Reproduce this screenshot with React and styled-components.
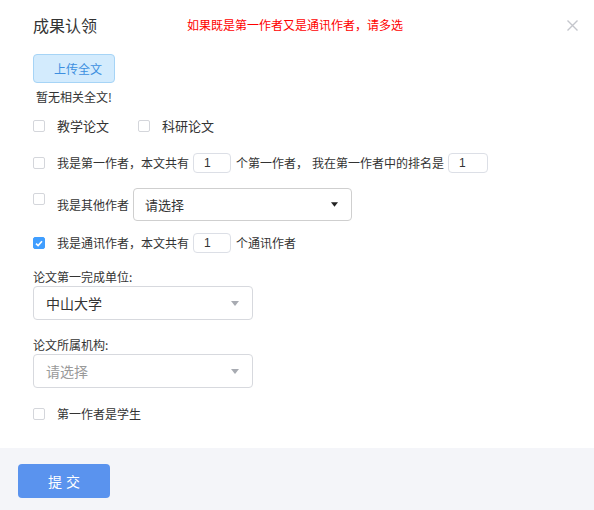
import React from "react";
import styled, { createGlobalStyle } from "styled-components";

const Global = createGlobalStyle`
  html, body { margin: 0; padding: 0; background: #fff; }
  body { font-family: "Noto Sans CJK SC", "Noto Sans", sans-serif; color: #333; }
`;

const Page = styled.div`
  width: 594px;
  height: 510px;
  display: flex;
  flex-direction: column;
  overflow: hidden;
`;

const Main = styled.div`
  flex: 1;
  padding: 0 16px 0 33px;
  display: flex;
  flex-direction: column;
  align-items: flex-start;
`;

const Header = styled.div`
  align-self: stretch;
  display: flex;
  align-items: center;
  height: 22px;
  margin-top: 14px;
`;

const Title = styled.div`
  font-size: 16px;
  line-height: 22px;
  color: #333;
`;

const Warn = styled.div`
  font-size: 12px;
  line-height: 22px;
  color: #ff0000;
  margin-left: 90px;
`;

const Close = styled.button`
  margin-left: auto;
  border: 0;
  background: none;
  padding: 0;
  width: 11px;
  height: 11px;
  display: flex;
  cursor: pointer;
`;

const UploadButton = styled.button`
  margin-top: 18px;
  width: 82px;
  height: 29px;
  border: 1px solid #a6d4f6;
  background: #d3ebfd;
  border-radius: 4px;
  color: #3d8fe0;
  font-family: inherit;
  font-size: 12px;
  padding: 0 0 0 8px;
  line-height: 27px;
`;

const Note = styled.div`
  margin-top: 5px;
  font-size: 12px;
  line-height: 18px;
  padding-left: 3px;
  color: #333;
`;

const Row = styled.div`
  display: flex;
  align-items: center;
  margin-top: ${(p) => p.$mt}px;
  min-height: 20px;
  font-size: ${(p) => p.$fs || 12}px;
  line-height: 20px;
  color: #333;
`;

const Box = styled.span`
  box-sizing: border-box;
  width: 12px;
  height: 12px;
  border: 1px solid ${(p) => (p.$on ? "#409eff" : "#d4d6db")};
  background: ${(p) => (p.$on ? "#409eff" : "#fff")};
  border-radius: 2px;
  display: inline-flex;
  align-items: center;
  justify-content: center;
  flex: none;
  margin-right: 12px;
  align-self: ${(p) => (p.$top ? "flex-start" : "center")};
  margin-top: ${(p) => (p.$top ? 5 : 0)}px;
`;

const Text = styled.span`
  white-space: nowrap;
  margin-right: ${(p) => p.$mr || 0}px;
`;

const NumInput = styled.span`
  box-sizing: border-box;
  width: ${(p) => p.$w}px;
  height: 20px;
  border: 1px solid #dcdfe6;
  border-radius: 4px;
  margin: 0 ${(p) => p.$mr}px 0 4px;
  padding-left: 10px;
  font-size: 12px;
  line-height: 18px;
  color: #333;
  font-family: "Liberation Sans", Arial, sans-serif;
`;

const Select = styled.div`
  box-sizing: border-box;
  width: ${(p) => p.$w}px;
  height: ${(p) => p.$h}px;
  border: 1px solid ${(p) => p.$border};
  border-radius: 4px;
  display: flex;
  align-items: center;
  padding: 0 13px 0 ${(p) => p.$pl || 12}px;
  font-size: ${(p) => p.$fs || 14}px;
  color: ${(p) => (p.$placeholder ? "#9a9a9a" : "#333")};
  margin-left: ${(p) => p.$ml || 0}px;
  margin-top: ${(p) => p.$mt || 0}px;
`;

const SelectText = styled.span`
  flex: 1;
  line-height: 20px;
`;

const Label = styled.div`
  margin-top: ${(p) => p.$mt}px;
  font-size: 12px;
  line-height: 18px;
  color: #333;
`;

const Footer = styled.div`
  height: 62px;
  background: #f4f5f9;
  padding: 16px 18px 0;
  box-sizing: border-box;
`;

const Submit = styled.button`
  width: 92px;
  height: 34px;
  border: 0;
  border-radius: 4px;
  background: #5a93ee;
  color: #fff;
  font-family: inherit;
  font-size: 14px;
  letter-spacing: 4px;
  padding-left: 10px;
`;

const Check = ({ on, top }) => (
  <Box $on={on} $top={top}>
    {on && (
      <svg width="8" height="7" viewBox="0 0 8 7">
        <path d="M1 3.6 L3.1 5.6 L7 1.2" stroke="#fff" strokeWidth="1.6" fill="none" />
      </svg>
    )}
  </Box>
);

const Caret = ({ color, w = 8 }) => (
  <svg width={w} height="5" viewBox="0 0 8 5">
    <path d="M0 0 L8 0 L4 5 Z" fill={color} />
  </svg>
);

export default function App() {
  return (
    <Page>
      <Global />
      <Main>
        <Header>
          <Title>成果认领</Title>
          <Warn>如果既是第一作者又是通讯作者，请多选</Warn>
          <Close aria-label="close">
            <svg width="11" height="11" viewBox="0 0 11 11">
              <path d="M0.5 0.5 L10.5 10.5 M10.5 0.5 L0.5 10.5" stroke="#c4c6cc" strokeWidth="1.4" />
            </svg>
          </Close>
        </Header>
        <UploadButton>上传全文</UploadButton>
        <Note>暂无相关全文!</Note>

        <Row $mt={10} $fs={13}>
          <Check />
          <Text $mr={29}>教学论文</Text>
          <Check />
          <Text>科研论文</Text>
        </Row>

        <Row $mt={17}>
          <Check />
          <Text>我是第一作者，本文共有</Text>
          <NumInput $w={38} $mr={5}>1</NumInput>
          <Text $mr={4}>个第一作者，</Text>
          <Text>我在第一作者中的排名是</Text>
          <NumInput $w={40} $mr={0}>1</NumInput>
        </Row>

        <Row $mt={15}>
          <Check top />
          <Text>我是其他作者</Text>
          <Select $w={219} $h={33} $border="#cfcfcf" $ml={4} $fs={13} $pl={11}>
            <SelectText>请选择</SelectText>
            <Caret color="#222" w={7} />
          </Select>
        </Row>

        <Row $mt={12}>
          <Check on />
          <Text>我是通讯作者，本文共有</Text>
          <NumInput $w={38} $mr={5}>1</NumInput>
          <Text>个通讯作者</Text>
        </Row>

        <Label $mt={15}>论文第一完成单位:</Label>
        <Select $w={220} $h={34} $border="#d7d9de">
          <SelectText>中山大学</SelectText>
          <Caret color="#a8abb2" />
        </Select>

        <Label $mt={16}>论文所属机构:</Label>
        <Select $w={220} $h={34} $border="#d7d9de" $placeholder>
          <SelectText>请选择</SelectText>
          <Caret color="#a8abb2" />
        </Select>

        <Row $mt={16}>
          <Check />
          <Text>第一作者是学生</Text>
        </Row>
      </Main>
      <Footer>
        <Submit>提交</Submit>
      </Footer>
    </Page>
  );
}
